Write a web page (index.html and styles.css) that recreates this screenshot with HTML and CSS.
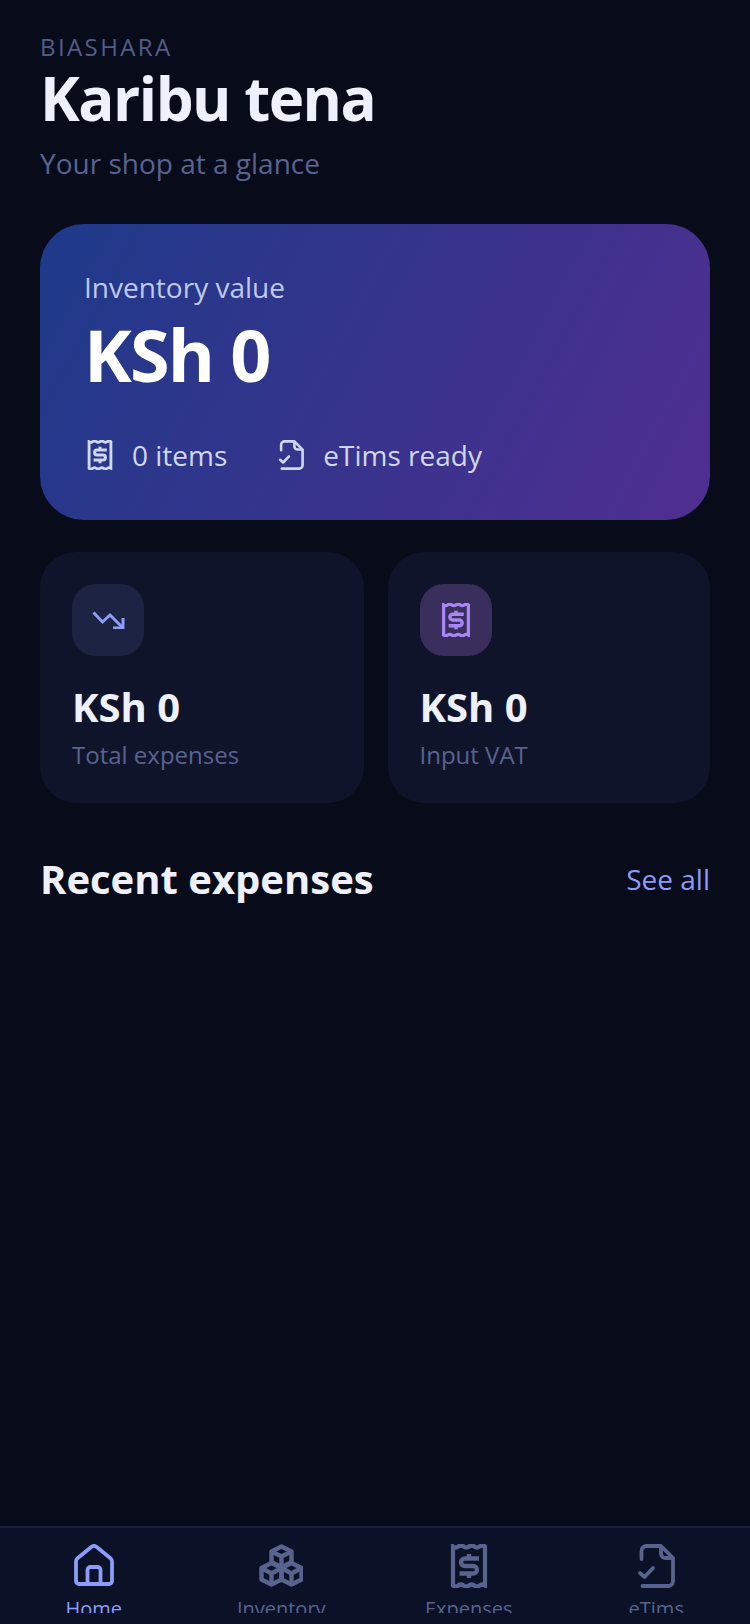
FILE: index.html
```html
<!DOCTYPE html>
<html lang="en">
<head>
<meta charset="utf-8">
<title>Biashara</title>
<link rel="stylesheet" href="styles.css">
</head>
<body>
<svg class="defs" width="0" height="0" aria-hidden="true">
  <defs>
    <symbol id="i-receipt" viewBox="0 0 36 44">
      <path d="M2 2.500q2.670 2 5.330 0t5.330 0 5.340 0 5.330 0 5.330 0 5.340 0v39q-2.670-2-5.340 0t-5.330 0-5.330 0-5.340 0-5.330 0-5.330 0z" fill="none" stroke="currentColor" stroke-width="4.200"/>
      <path d="M28 14.500H13.800a3.750 3.750 0 0 0 0 7.500h8.400a3.750 3.750 0 0 1 0 7.500H8.500M18 10v4.500M18 29.500V34" fill="none" stroke="currentColor" stroke-width="4.400"/>
    </symbol>
    <symbol id="i-doc" viewBox="0 0 36 44">
      <path d="M3.500 15V7a5 5 0 0 1 5-5H23L35 14v23a5 5 0 0 1-5 5H4.500" fill="none" stroke="currentColor" stroke-width="3.800" stroke-linecap="round" stroke-linejoin="round"/>
      <path d="M23 2v7.500a4.500 4.500 0 0 0 4.500 4.500H35" fill="none" stroke="currentColor" stroke-width="3.800" stroke-linejoin="round"/>
      <path d="M2 29l4.500 4 8.500-9" fill="none" stroke="currentColor" stroke-width="3.800" stroke-linecap="round" stroke-linejoin="round"/>
    </symbol>
  </defs>
</svg>
<div class="screen">
  <main class="content">
    <header class="header">
      <div class="eyebrow">BIASHARA</div>
      <h1 class="title">Karibu tena</h1>
      <p class="subtitle">Your shop at a glance</p>
    </header>

    <section class="hero">
      <div class="hero-label">Inventory value</div>
      <div class="hero-value">KSh 0</div>
      <div class="hero-meta">
        <div class="meta-item">
          <svg class="meta-icon"><use href="#i-receipt"/></svg>
          <span>0 items</span>
        </div>
        <div class="meta-item">
          <svg class="meta-icon"><use href="#i-doc"/></svg>
          <span>eTims ready</span>
        </div>
      </div>
    </section>

    <section class="stats">
      <article class="stat stat-left">
        <div class="stat-icon stat-icon-blue">
          <svg class="trend" viewBox="0 0 33 18" fill="none" stroke="currentColor" stroke-width="3">
            <path d="M1.500 1.500l9 9.500L18 4l12.500 12.500"/>
            <path d="M31 7v10H21"/>
          </svg>
        </div>
        <div class="stat-value">KSh 0</div>
        <div class="stat-label">Total expenses</div>
      </article>
      <article class="stat stat-right">
        <div class="stat-icon stat-icon-purple">
          <svg class="stat-receipt"><use href="#i-receipt"/></svg>
        </div>
        <div class="stat-value">KSh 0</div>
        <div class="stat-label">Input VAT</div>
      </article>
    </section>

    <section class="section-head">
      <h2 class="section-title">Recent expenses</h2>
      <span class="see-all">See all</span>
    </section>
  </main>

  <nav class="nav">
    <div class="nav-item active">
      <svg class="nav-icon" viewBox="0 0 40 44" fill="none" stroke="currentColor" stroke-width="3.800" stroke-linejoin="round">
        <path d="M3.200 14.500 17.600 2.800a4 4 0 0 1 4.800 0L36.800 14.500A4 4 0 0 1 38 17.500V37a3 3 0 0 1-3 3H5a3 3 0 0 1-3-3V17.500a4 4 0 0 1 1.200-3z"/>
        <path d="M13.500 40V26a3 3 0 0 1 3-3h7a3 3 0 0 1 3 3v14"/>
      </svg>
      <span class="nav-label">Home</span>
    </div>
    <div class="nav-item">
      <svg class="nav-icon" viewBox="-0.500 0 44 44" fill="none" stroke="currentColor" stroke-width="4.400" stroke-linejoin="round">
        <path d="M22 2.500l10 5v10.500L22 23.500l-10-5.500V7.500z"/>
        <path d="M12 7.500L22 12.500l10-5M22 12.500V23.500"/>
        <path d="M12 19l10 5v11.500l-10 5-10-5V24z"/>
        <path d="M2 24l10 5.500L22 24M12 29.500V40.500"/>
        <path d="M32 19l10 5v11.500l-10 5-10-5V24z"/>
        <path d="M22 24l10 5.500L42 24M32 29.500V40.500"/>
      </svg>
      <span class="nav-label">Inventory</span>
    </div>
    <div class="nav-item">
      <svg class="nav-icon"><use href="#i-receipt"/></svg>
      <span class="nav-label">Expenses</span>
    </div>
    <div class="nav-item">
      <svg class="nav-icon"><use href="#i-doc"/></svg>
      <span class="nav-label">eTims</span>
    </div>
  </nav>
</div>
</body>
</html>
```
FILE: styles.css
```css
* { box-sizing: border-box; }
html, body { margin: 0; padding: 0; }
body {
  background: #080b1a;
  font-family: "Open Sans", "Noto Sans", sans-serif;
  color: #eef0fb;
}
.defs { position: absolute; }
.screen {
  height: 1624px;
  display: flex;
  flex-direction: column;
  overflow: hidden;
}
.content { flex: 1; padding: 32px 40px 0; }

.eyebrow {
  font-size: 24px;
  line-height: 30px;
  letter-spacing: 2.400px;
  color: #535d88;
}
.title {
  margin: 0;
  font-size: 60px;
  line-height: 72px;
  font-weight: 700;
  letter-spacing: -1.500px;
  color: #eef0fb;
}
.subtitle {
  margin: 10px 0 0;
  font-size: 28px;
  line-height: 38px;
  color: #59638e;
}

.hero {
  margin-top: 42px;
  height: 296px;
  padding: 44px;
  border-radius: 44px;
  background: linear-gradient(118deg, #1e3a8a 0%, #502e90 100%);
}
.hero-label {
  font-size: 28px;
  line-height: 38px;
  color: #c0c8ee;
}
.hero-value {
  font-size: 72px;
  line-height: 88px;
  font-weight: 700;
  letter-spacing: -1.800px;
  color: #ffffff;
  margin-top: 4px;
}
.hero-meta {
  display: flex;
  gap: 48px;
  margin-top: 38px;
  color: #d0d6f4;
  font-size: 28px;
  line-height: 38px;
}
.meta-item { display: flex; align-items: center; gap: 16px; }
.meta-icon { width: 32px; height: 30px; }

.stats { display: flex; gap: 24px; margin-top: 32px; }
.stat {
  height: 251px;
  padding: 32px;
  border-radius: 36px;
  background: #10142a;
}
.stat-left { width: 323.500px; }
.stat-right { width: 322.500px; }
.stat-icon {
  width: 72px;
  height: 72px;
  border-radius: 24px;
  display: flex;
  align-items: center;
  justify-content: center;
}
.stat-icon-blue { background: #1d2342; color: #8c9cf8; }
.stat-icon-purple { background: #3a2f5c; color: #a886f5; }
.trend { width: 33px; height: 18px; }
.stat-receipt { width: 28px; height: 34px; }
.stat-value {
  margin-top: 24px;
  font-size: 40px;
  line-height: 54px;
  font-weight: 700;
  color: #eef0fb;
}
.stat-label {
  margin-top: 5px;
  font-size: 24px;
  line-height: 32px;
  color: #59638e;
}

.section-head {
  display: flex;
  justify-content: space-between;
  align-items: center;
  margin-top: 49px;
}
.section-title {
  margin: 0;
  font-size: 40px;
  line-height: 54px;
  font-weight: 700;
  color: #eef0fb;
}
.see-all { font-size: 28px; line-height: 38px; color: #8c9cf8; }

.nav {
  height: 98px;
  flex: none;
  display: grid;
  grid-template-columns: repeat(4, 1fr);
  border-top: 2px solid #1a2140;
  background: #0b1126;
  padding-top: 16px;
  color: #59638e;
}
.nav-item {
  height: 69px;
  overflow: hidden;
  display: flex;
  flex-direction: column;
  align-items: center;
}
.nav-icon { width: 44px; height: 44px; flex: none; }
.nav-label { margin-top: 7px; font-size: 20px; line-height: 28px; }
.active { color: #8c9cf8; }
```
